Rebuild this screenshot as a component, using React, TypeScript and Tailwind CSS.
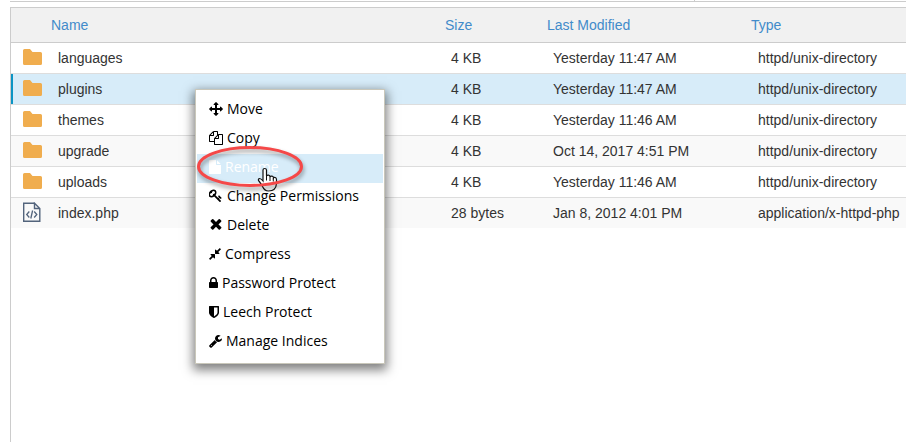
import type { ReactNode } from 'react';
import { clsx } from 'clsx';

type Entry = {
  name: string;
  size: string;
  modified: string;
  type: string;
  kind: 'folder' | 'code';
};

type MenuAction = {
  label: string;
  icon: ReactNode;
};

const entries: Entry[] = [
  { name: 'languages', size: '4 KB', modified: 'Yesterday 11:47 AM', type: 'httpd/unix-directory', kind: 'folder' },
  { name: 'plugins', size: '4 KB', modified: 'Yesterday 11:47 AM', type: 'httpd/unix-directory', kind: 'folder' },
  { name: 'themes', size: '4 KB', modified: 'Yesterday 11:46 AM', type: 'httpd/unix-directory', kind: 'folder' },
  { name: 'upgrade', size: '4 KB', modified: 'Oct 14, 2017 4:51 PM', type: 'httpd/unix-directory', kind: 'folder' },
  { name: 'uploads', size: '4 KB', modified: 'Yesterday 11:46 AM', type: 'httpd/unix-directory', kind: 'folder' },
  { name: 'index.php', size: '28 bytes', modified: 'Jan 8, 2012 4:01 PM', type: 'application/x-httpd-php', kind: 'code' },
];

const selected = 'plugins';
const hovered = 'Rename';

function Glyph({ width, box, d }: { width: number; box: string; d: string }) {
  return (
    <svg width={width} height={14} viewBox={box} fill="currentColor" className="shrink-0" aria-hidden="true">
      <path d={d} />
    </svg>
  );
}

const actions: MenuAction[] = [
  {
    label: 'Move',
    icon: (
      <Glyph width={14} box="0 0 1792 1792" d="M1792 896q0 26-19 45l-256 256q-19 19-45 19t-45-19-19-45v-128h-384v384h128q26 0 45 19t19 45-19 45l-256 256q-19 19-45 19t-45-19l-256-256q-19-19-19-45t19-45 45-19h128v-384h-384v128q0 26-19 45t-45 19-45-19l-256-256q-19-19-19-45t19-45l256-256q19-19 45-19t45 19 19 45v128h384v-384h-128q-26 0-45-19t-19-45 19-45l256-256q19-19 45-19t45 19l256 256q19 19 19 45t-19 45-45 19h-128v384h384v-128q0-26 19-45t45-19 45 19l256 256q19 19 19 45z" />
    ),
  },
  {
    label: 'Copy',
    icon: (
      <Glyph width={14} box="0 0 1792 1792" d="M1696 384q40 0 68 28t28 68v1216q0 40-28 68t-68 28h-960q-40 0-68-28t-28-68v-288h-544q-40 0-68-28t-28-68v-672q0-40 20-88t48-76l408-408q28-28 76-48t88-20h416q40 0 68 28t28 68v328q68-40 128-40h416zm-544 213l-299 299h299v-299zm-640-384l-299 299h299v-299zm196 647l316-316v-416h-384v416q0 40-28 68t-68 28h-416v640h512v-256q0-40 20-88t48-76zm956 804v-1152h-384v416q0 40-28 68t-68 28h-416v640h896z" />
    ),
  },
  {
    label: 'Rename',
    icon: (
      <Glyph width={12} box="128 0 1536 1792" d="M1152 512v-472q22 14 36 28l408 408q14 14 28 36h-472zm-128 32q0 40 28 68t68 28h544v1056q0 40-28 68t-68 28h-1344q-40 0-68-28t-28-68v-1600q0-40 28-68t68-28h800v544z" />
    ),
  },
  {
    label: 'Change Permissions',
    icon: (
      <Glyph width={14} box="64 64 1792 1792" d="M832 512q0-80-56-136t-136-56-136 56-56 136q0 42 19 83-41-19-83-19-80 0-136 56t-56 136 56 136 136 56 136-56 56-136q0-42-19-83 41 19 83 19 80 0 136-56t56-136zm851 704q0 17-49 66t-66 49q-9 0-28.5-16t-36.5-33-38.5-40-24.5-26l-96 96 220 220q28 28 28 68 0 42-39 81t-81 39q-40 0-68-28l-671-671q-176 131-365 131-163 0-265.5-102.5t-102.5-265.5q0-160 95-313t248-248 313-95q163 0 265.5 102.5t102.5 265.5q0 189-131 365l355 355 96-96q-3-3-26-24.5t-40-38.5-33-36.5-16-28.5q0-17 49-66t66-49q13 0 23 10 6 6 46 44.5t82 79.5 86.5 86 73 78 28.5 41z" />
    ),
  },
  {
    label: 'Delete',
    icon: (
      <Glyph width={14} box="128 260 1536 1536" d="M1490 1322q0 40-28 68l-136 136q-28 28-68 28t-68-28l-294-294-294 294q-28 28-68 28t-68-28l-136-136q-28-28-28-68t28-68l294-294-294-294q-28-28-28-68t28-68l136-136q28-28 68-28t68 28l294 294 294-294q28-28 68-28t68 28l136 136q28 28 28 68t-28 68l-294 294 294 294q28 28 28 68z" />
    ),
  },
  {
    label: 'Compress',
    icon: (
      <Glyph width={12} box="128 0 1536 1792" d="M896 960v448q0 26-19 45t-45 19-45-19l-144-144-332 332q-10 10-23 10t-23-10l-114-114q-10-10-10-23t10-23l332-332-144-144q-19-19-19-45t19-45 45-19h448q26 0 45 19t19 45zm755-672q0 13-10 23l-332 332 144 144q19 19 19 45t-19 45-45 19h-448q-26 0-45-19t-19-45v-448q0-26 19-45t45-19 45 19l144 144 332-332q10-10 23-10t23 10l114 114q10 10 10 23z" />
    ),
  },
  {
    label: 'Password Protect',
    icon: (
      <Glyph width={9} box="320 0 1152 1792" d="M640 768h512v-192q0-106-75-181t-181-75-181 75-75 181v192zm832 96v576q0 40-28 68t-68 28h-960q-40 0-68-28t-28-68v-576q0-40 28-68t68-28h32v-192q0-184 132-316t316-132 316 132 132 316v192h32q40 0 68 28t28 68z" />
    ),
  },
  {
    label: 'Leech Protect',
    icon: (
      <Glyph width={10} box="256 0 1280 1792" d="M1344 960v-640h-448v1137q119-63 213-137 235-184 235-360zm192-768v768q0 86-33.5 170.5t-83 150-118 127.5-126.5 103-121 77.5-89.5 49.5-42.5 20q-12 6-26 6t-26-6q-16-7-42.5-20t-89.5-49.5-121-77.5-126.5-103-118-127.5-83-150-33.5-170.5v-768q0-26 19-45t45-19h1152q26 0 45 19t19 45z" />
    ),
  },
  {
    label: 'Manage Indices',
    icon: (
      <Glyph width={13} box="64 0 1664 1792" d="M448 1472q0-26-19-45t-45-19-45 19-19 45 19 45 45 19 45-19 19-45zm644-420l-682 682q-37 37-90 37-52 0-91-37l-106-108q-38-36-38-90 0-53 37-91l681-681q39 98 114.5 173.5t173.5 114.5zm634-435q0 39-23 106-47 134-164.5 217.5t-258.5 83.5q-185 0-316.5-131.5t-131.5-316.5 131.5-316.5 316.5-131.5q58 0 121.5 16.5t107.5 46.5q16 11 16 28t-16 28l-293 169v224l193 107q5-3 79-48.5t135.5-81 70.5-35.5q15 0 23.5 10t8.5 25z" />
    ),
  },
];

function FolderIcon() {
  return (
    <svg width="19" height="16" viewBox="0 0 19 16" fill="#f0ad4e" aria-hidden="true">
      <path d="M0 1.5Q0 0 1.500 0H7L9.500 3H17.500Q19 3 19 4.500V14.500Q19 16 17.500 16H1.500Q0 16 0 14.500Z" />
    </svg>
  );
}

function CodeFileIcon() {
  return (
    <svg width="18" height="20" viewBox="0 -1 18 20" fill="none" stroke="#53647c" aria-hidden="true">
      <path strokeWidth="1.4" d="M11.5 .2H.7V18.3H16.8V5.5L11.5 .2V5.5H16.8" />
      <path strokeWidth="1.3" d="M6.300 8.500L3.700 11.500L6.300 14.500M11.200 8.500L13.800 11.500L11.200 14.500M9.600 7.500L7.800 15.500" />
    </svg>
  );
}

function ContextMenu() {
  return (
    <div className="absolute left-[195px] top-[89px] w-[190px] border border-[#c9c7ba] bg-white py-1.5 font-['Open_Sans',sans-serif] text-sm text-black shadow-[0_4px_10px_2px_rgba(0,0,0,0.5)]">
      <ul role="menu" className="px-px">
        {actions.map((action) => (
          <li key={action.label} role="none">
            <button
              type="button"
              role="menuitem"
              className={clsx(
                'flex h-[29px] w-full items-center gap-1 px-3 pb-1 text-left',
                action.label === hovered && 'bg-[#d7ecf9] text-white'
              )}
            >
              {action.icon}
              {action.label}
            </button>
          </li>
        ))}
      </ul>
    </div>
  );
}

function Callout() {
  return (
    <svg className="pointer-events-none absolute left-[190px] top-[140px]" width="120" height="60" viewBox="0 0 120 60" fill="none" aria-hidden="true">
      <path
        d="M73 30Q73 28.500 74.700 28.500T76.500 30V36Q77 35 78.500 35.200T80 37Q80.500 36 82 36.200T83.500 38Q84 37.200 85.200 37.500T86.500 39.500V43.500Q86 51 78.500 51Q74.500 51 72.500 46.500Q69.500 41.500 68.500 40.500Q68 38.800 69.500 38.500Q71 38.500 73 41Z"
        fill="#fff"
        stroke="#111"
        strokeWidth="1.2"
      />
      <path d="M76.500 36V40.500M80 37V41M83.300 38V41.500" stroke="#111" />
      <ellipse cx="60" cy="26.500" rx="51.500" ry="19" stroke="#f54848" strokeWidth="3" className="drop-shadow-[1px_3px_2px_rgba(0,0,0,0.4)]" />
    </svg>
  );
}

export default function App() {
  return (
    <div className="relative flex min-h-screen flex-col overflow-hidden bg-white pl-2.5 font-['Liberation_Sans',Arial,sans-serif] text-sm text-[#333]">
      {/* Bottom edge of the toolbar */}
      <div className="flex h-0.5 border-b border-[#ccc]">
        <div className="flex-1 border-r border-[#ccc]" />
        <div className="w-[211px]" />
      </div>

      <main className="mt-[5px] flex-1 border-t border-l border-[#ccc]">
        <table className="w-full table-fixed border-separate border-spacing-0 text-left">
          <colgroup>
            <col className="w-[34px]" />
            <col />
            <col className="w-[102px]" />
            <col className="w-[204px]" />
            <col className="w-[161px]" />
          </colgroup>
          <thead>
            <tr className="h-[34px] bg-[#f1f1f1] text-[#428bca]">
              <th aria-label="Icon" />
              <th className="px-1.5 font-normal">Name</th>
              <th className="px-1.5 font-normal">Size</th>
              <th className="px-1.5 font-normal">Last Modified</th>
              <th className="px-1.5 font-normal">Type</th>
            </tr>
          </thead>
          <tbody>
            {entries.map((entry, index) => (
              <tr
                key={entry.name}
                className={clsx(
                  'h-[31px] *:border-t',
                  index === 0 ? '*:border-[#ccc]' : '*:border-[#ddd]',
                  entry.name === selected ? 'bg-[#d7ecf9]' : index % 2 === 1 && 'bg-[#f9f9f9]'
                )}
              >
                <td
                  className={clsx(
                    'pl-3 pb-0.5',
                    entry.name === selected && 'shadow-[inset_2px_0_0_#0a94c4]'
                  )}
                >
                  {entry.kind === 'folder' ? <FolderIcon /> : <CodeFileIcon />}
                </td>
                <td className="pl-[13px]">{entry.name}</td>
                <td className="pl-3">{entry.size}</td>
                <td className="pl-3">{entry.modified}</td>
                <td className="pl-[13px] whitespace-nowrap">{entry.type}</td>
              </tr>
            ))}
          </tbody>
        </table>
      </main>

      <ContextMenu />
      <Callout />
    </div>
  );
}
